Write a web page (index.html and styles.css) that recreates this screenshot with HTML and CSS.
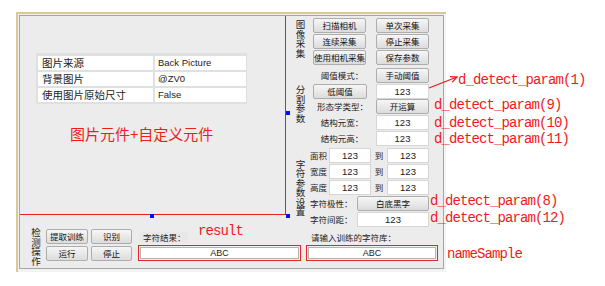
FILE: index.html
```html
<!DOCTYPE html>
<html lang="zh-CN">
<head>
<meta charset="utf-8">
<title>字符识别界面</title>
<link rel="stylesheet" href="styles.css">
</head>
<body>
<div class="stage">
  <div class="frame">
    <div class="inner">
      <div class="top">
        <div class="picture">
          <div class="props">
            <div class="pk">图片来源</div><div class="pv">Back Picture</div>
            <div class="pk">背景图片</div><div class="pv">@ZV0</div>
            <div class="pk">使用图片原始尺寸</div><div class="pv">False</div>
          </div>
          <div class="caption">图片元件+自定义元件</div>
        </div>
        <div class="panel">
          <div class="group g1">
            <div class="vcol"><div class="vl">图像采集</div></div>
            <div class="grid">
              <div class="btn">扫描相机</div><div class="btn">单次采集</div>
              <div class="btn">连续采集</div><div class="btn">停止采集</div>
              <div class="btn">使用相机采集</div><div class="btn">保存参数</div>
            </div>
          </div>
          <div class="group g2">
            <div class="vcol"><div class="vl">分割参数</div></div>
            <div class="grid">
              <div class="lbl">阈值模式：</div><div class="btn">手动阈值</div>
              <div class="btn">低阈值</div><div class="inp">123</div>
              <div class="lbl">形态学类型：</div><div class="btn">开运算</div>
              <div class="lbl">结构元宽：</div><div class="inp">123</div>
              <div class="lbl">结构元高：</div><div class="inp">123</div>
            </div>
          </div>
          <div class="group g3">
            <div class="vcol"><div class="vl">字符参数设置</div></div>
            <div class="grid">
              <div class="lbl-l">面积</div><div class="inp">123</div><div class="to">到</div><div class="inp">123</div>
              <div class="lbl-l">宽度</div><div class="inp">123</div><div class="to">到</div><div class="inp">123</div>
              <div class="lbl-l">高度</div><div class="inp">123</div><div class="to">到</div><div class="inp">123</div>
              <div class="wide"><div class="lbl-w">字符极性：</div><div class="btn ctl">白底黑字</div></div>
              <div class="wide"><div class="lbl-w">字符间距：</div><div class="inp ctl">123</div></div>
            </div>
          </div>
        </div>
      </div>
      <div class="bottom">
        <div class="vl bvl">检测操作</div>
        <div class="bgrid">
          <div class="btn">提取训练</div><div class="btn">识别</div>
          <div class="btn">运行</div><div class="btn">停止</div>
        </div>
        <div class="col rcol">
          <div class="clbl">字符结果：</div>
          <div class="box">ABC</div>
        </div>
        <div class="col ncol">
          <div class="clbl">请输入训练的字符库：</div>
          <div class="box">ABC</div>
        </div>
      </div>
    </div>
  </div>

  <div class="handle h1"></div>
  <div class="handle h2"></div>
  <div class="handle h3"></div>

  <svg class="arrow" width="40" height="24" viewBox="0 0 40 24">
    <line x1="4" y1="18" x2="32" y2="7" stroke="#ee1a1a" stroke-width="1.3"/>
    <polyline points="25,6.6 32,7 27.2,12.1" fill="none" stroke="#ee1a1a" stroke-width="1.3"/>
  </svg>

  <div class="note n1">d_detect_param(1)</div>
  <div class="note n9">d_detect_param(9)</div>
  <div class="note n10">d_detect_param(10)</div>
  <div class="note n11">d_detect_param(11)</div>
  <div class="note n8">d_detect_param(8)</div>
  <div class="note n12">d_detect_param(12)</div>
  <div class="note nres">result</div>
  <div class="note nname">nameSample</div>
</div>
</body>
</html>
```
FILE: styles.css
```css
* { box-sizing: border-box; margin: 0; padding: 0; }
html, body { background: #fff; }
body {
  width: 605px; height: 286px; overflow: hidden;
  font-family: "Noto Sans CJK SC", "Liberation Sans", sans-serif;
  color: #1c1c1c;
}
.stage { position: relative; width: 605px; height: 286px; padding: 12px 0 0 16px; }

.frame {
  width: 430px; height: 260px;
  border-top: 2px solid #dac898; border-left: 2px solid #dac898;
  background: #f3f3f3;
  padding: 1px 2px 3px 1px;
}
.inner {
  height: 100%;
  border: 1px solid #a6a6a6;
  background: #ececec;
  display: flex; flex-direction: column;
}
.top { display: flex; height: 212px; }

.picture {
  width: 266px; height: 199px;
  border-right: 1px solid #e52020; border-bottom: 1px solid #e52020;
  padding: 37px 0 0 16px;
}
.props {
  width: 211px;
  background: #e0e0e0;
  padding: 3px 1px 2px 2px;
  display: grid;
  grid-template-columns: 115px 91px;
  grid-auto-rows: 14px;
  gap: 2px;
}
.pk, .pv { background: #fff; line-height: 14px; white-space: nowrap; overflow: hidden; }
.pk { font-size: 10.5px; padding-left: 4px; color: #222; }
.pv { font-family: "Liberation Sans", sans-serif; font-size: 9.5px; padding-left: 3px; color: #222; }
.caption {
  margin: 21px 0 0 34px;
  font-size: 15px; line-height: 17px;
  color: #f01c1c;
  white-space: nowrap;
}

.panel { width: 157px; padding-top: 2px; display: flex; flex-direction: column; }
.group { display: flex; }
.vcol { display: flex; justify-content: center; }
.vl {
  width: 10px;
  flex: none;
  word-break: break-all;
  font-size: 9.5px; line-height: 9.5px;
  text-align: center;
  color: #222;
}
.g1 .vcol { width: 27px; padding-left: 2px; align-items: flex-start; padding-top: 2px; }
.g1 .grid {
  display: grid;
  grid-template-columns: 53px 53px;
  grid-auto-rows: 15px;
  column-gap: 10px; row-gap: 1px;
}
.g2 { margin-top: 3px; }
.g2 .vcol { width: 27px; padding-left: 2px; align-items: flex-start; padding-top: 17px; }
.g2 .grid {
  display: grid;
  grid-template-columns: 54px 53px;
  grid-template-rows: 16px 15px 16px 16px 15px;
  column-gap: 9px;
}
.g2 .grid > * { height: 15px; }
.g3 { margin-top: 2px; }
.g3 .vcol { width: 24px; padding-left: 5px; align-items: center; }
.g3 .grid {
  display: grid;
  grid-template-columns: 19px 42px 16px 42px;
  grid-template-rows: repeat(5, 16px);
}
.g3 .grid > * { height: 15px; }
.wide { grid-column: 1 / -1; display: flex; }
.lbl-w { width: 47px; font-size: 8.5px; line-height: 15px; white-space: nowrap; color: #222; }
.ctl { width: 72px; }

.btn {
  background: linear-gradient(#f6f6f6, #dcdcdc);
  border: 1px solid #adadad;
  border-radius: 2px;
  font-size: 8.5px; line-height: 13px;
  text-align: center; white-space: nowrap;
  color: #111;
}
.inp {
  background: #fff;
  border: 1px solid #d6d6d6;
  font-family: "Liberation Sans", sans-serif;
  font-size: 9.5px; line-height: 13px;
  text-align: center; color: #222;
}
.lbl { font-size: 8.5px; line-height: 15px; text-align: center; padding-left: 4px; white-space: nowrap; color: #222; }
.lbl-l { font-size: 8.5px; line-height: 15px; white-space: nowrap; color: #222; }
.to { font-size: 8.5px; line-height: 15px; text-align: center; color: #222; }

.bottom { display: flex; height: 40px; padding-left: 11px; align-items: flex-start; }
.bvl { margin-top: 0; }
.bgrid {
  margin: 1px 0 0 5px;
  display: grid;
  grid-template-columns: 42px 41px;
  grid-auto-rows: 15px;
  column-gap: 3px; row-gap: 2px;
}
.col { display: flex; flex-direction: column; }
.rcol { margin-left: 6px; width: 163px; }
.ncol { margin-left: 5px; width: 132px; }
.clbl {
  margin: 4px 0 0 2px;
  height: 11px; line-height: 11px;
  font-size: 8.5px; color: #222; white-space: nowrap;
  padding-left: 3px;
}
.rcol .clbl { background: #e8e8e8; width: 48px; }
.box {
  margin-top: 2px; height: 16px;
  border: 1px solid #e62626;
  background: #fff;
  box-shadow: inset 0 0 0 1px #efefef, inset 0 0 0 2px #b4b4b4;
  font-family: "Liberation Sans", sans-serif;
  font-size: 9px; line-height: 14px;
  text-align: center; color: #222;
}

.handle { position: absolute; width: 4px; height: 4px; background: #0010ff; }
.h1 { left: 150px; top: 214px; }
.h2 { left: 286px; top: 214px; }
.h3 { left: 286px; top: 111px; }

.arrow { position: absolute; left: 425px; top: 70px; }

.note {
  position: absolute;
  font-family: "Courier New", "Nimbus Mono PS", "FreeMono", "Liberation Mono", monospace;
  font-size: 14px; line-height: 14px;
  letter-spacing: -0.9px;
  color: #f01a1a;
  white-space: nowrap;
}
.n1 { left: 458px; top: 73px; }
.n9 { left: 434px; top: 98px; }
.n10 { left: 434px; top: 116px; }
.n11 { left: 434px; top: 132px; }
.n8 { left: 430px; top: 194px; }
.n12 { left: 430px; top: 211px; }
.nres { left: 198px; top: 224px; }
.nname { left: 447px; top: 247px; }
```
